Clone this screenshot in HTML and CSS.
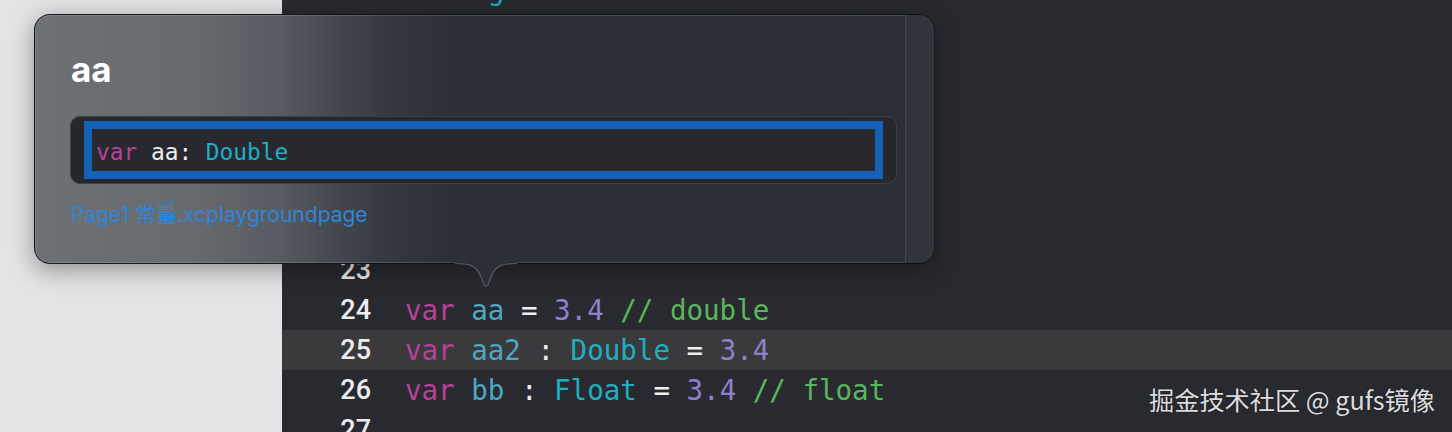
FILE: index.html
```html
<!DOCTYPE html>
<html lang="zh">
<head>
<meta charset="utf-8">
<title>Quick Help</title>
<link rel="stylesheet" href="styles.css">
</head>
<body>
<div class="app">
  <aside class="sidebar"></aside>
  <main class="editor">
    <div class="lines">
      <div class="line dim"><span class="num">16</span><code class="src">var  <span class="t">g</span></code></div>
      <div class="line"><span class="num"></span><code class="src"></code></div>
      <div class="line"><span class="num"></span><code class="src"></code></div>
      <div class="line"><span class="num"></span><code class="src"></code></div>
      <div class="line"><span class="num"></span><code class="src"></code></div>
      <div class="line"><span class="num"></span><code class="src"></code></div>
      <div class="line"><span class="num"></span><code class="src"></code></div>
      <div class="line"><span class="num">23</span><code class="src"></code></div>
      <div class="line"><span class="num">24</span><code class="src"><span class="k">var</span> <span class="v">aa</span> <span class="o">=</span> <span class="n">3.4</span> <span class="c">// double</span></code></div>
      <div class="line current"><span class="num">25</span><code class="src"><span class="k">var</span> <span class="v">aa2</span> <span class="o">:</span> <span class="t">Double</span> <span class="o">=</span> <span class="n">3.4</span></code></div>
      <div class="line"><span class="num">26</span><code class="src"><span class="k">var</span> <span class="v">bb</span> <span class="o">:</span> <span class="t">Float</span> <span class="o">=</span> <span class="n">3.4</span> <span class="c">// float</span></code></div>
      <div class="line"><span class="num">27</span><code class="src"></code></div>
    </div>
  </main>
</div>

<div class="popover">
  <div class="pop-main">
    <h1 class="pop-title">aa</h1>
    <div class="decl">
      <div class="decl-focus"><code class="decl-code"><span class="k">var</span> <span class="w">aa</span><span class="w">:</span> <span class="t">Double</span></code></div>
    </div>
    <a class="pop-link">Page1 常量.xcplaygroundpage</a>
  </div>
  <div class="pop-strip"></div>
  <svg class="pop-arrow" width="62" height="28" viewBox="0 0 62 28">
    <path d="M0 0 L0 2 C15 2 19 4 24 11 L29 23 Q31 26.5 33 23 L38 11 C43 4 47 2 62 2 L62 0 Z" fill="#2b2e37"/>
    <path d="M0 1.5 C15 1.5 19 3.5 24 10.5 L29 22.5 Q31 26 33 22.5 L38 10.5 C43 3.5 47 1.5 62 1.5" fill="none" stroke="#555a63" stroke-width="1.2"/>
  </svg>
</div>

<div class="watermark">掘金技术社区 @ gufs镜像</div>
</body>
</html>
```

FILE: styles.css
```css
html, body {
  margin: 0;
  padding: 0;
  width: 1452px;
  height: 432px;
  overflow: hidden;
  background: #292a30;
}

.app {
  display: flex;
  height: 432px;
}

.sidebar {
  width: 282px;
  flex: none;
  background: #e4e4e6;
}

.editor {
  flex: 1;
  background: #292a30;
  overflow: hidden;
}

.lines {
  margin-top: -30px;
  display: flex;
  flex-direction: column;
}

.line {
  height: 40px;
  display: flex;
  align-items: center;
}

.line.current {
  background: #3a3a3c;
}

.num {
  width: 89px;
  flex: none;
  text-align: right;
  font-family: Roboto, "Noto Sans", sans-serif;
  font-weight: 500;
  font-size: 27px;
  color: #ececee;
}

.line.dim .num {
  color: #6e6f74;
}

.src {
  margin-left: 34px;
  font-family: "DejaVu Sans Mono", "Liberation Mono", monospace;
  font-size: 27.5px;
  white-space: pre;
  color: #e8e8ea;
}

.k { color: #b8409a; }
.v { color: #4aa8c2; }
.t { color: #1fafc3; }
.n { color: #8d80cc; }
.c { color: #58b75a; }
.o { color: #ececee; }
.w { color: #eeeef0; }

/* Quick help popover */
.popover {
  position: absolute;
  left: 34px;
  top: 14px;
  width: 901px;
  height: 250px;
  box-sizing: border-box;
  border: 1px solid rgba(10, 10, 12, 0.85);
  border-radius: 16px;
  background: linear-gradient(90deg, #6d7176 0%, #666a6f 18%, #585c62 27%, #42464d 34%, #33373f 40%, #2c3039 46%, #2b2e37 100%);
  box-shadow: 0 6px 24px rgba(0, 0, 0, 0.38), inset 0 0 0 1px rgba(255, 255, 255, 0.14);
  display: flex;
}

.pop-main {
  flex: 1;
  padding: 0 8px 0 35px;
  display: flex;
  flex-direction: column;
  align-items: flex-start;
}

.pop-title {
  margin: 34px 0 0 1px;
  height: 40px;
  line-height: 40px;
  font-family: Inter, "Noto Sans", sans-serif;
  font-weight: 700;
  font-size: 35px;
  color: #ffffff;
}

.decl {
  margin-top: 27px;
  align-self: stretch;
  height: 68px;
  box-sizing: border-box;
  border: 1px solid #3e4149;
  border-radius: 10px;
  background: #25272d;
  padding: 4px 13px 0 13px;
}

.decl-focus {
  height: 58px;
  box-sizing: border-box;
  border: 8px solid #1561b7;
  background: #27292f;
  display: flex;
  align-items: center;
  padding: 3px 0 0 4px;
}

.decl-code {
  font-family: "DejaVu Sans Mono", "Liberation Mono", monospace;
  font-size: 22.8px;
  white-space: pre;
  color: #eeeef0;
}

.pop-link {
  margin: 18px 0 0 1px;
  line-height: 26px;
  font-family: Inter, "Noto Sans", "Noto Sans CJK SC", sans-serif;
  font-size: 21px;
  color: #2f86d8;
}

.pop-strip {
  width: 28px;
  flex: none;
  border-left: 1px solid #43474f;
  background: #30343c;
  border-radius: 0 15px 15px 0;
}

.pop-arrow {
  position: absolute;
  left: 420px;
  top: calc(100% - 1px);
  display: block;
}

.watermark {
  position: absolute;
  left: 1149px;
  top: 382px;
  line-height: 34px;
  font-family: "Noto Sans CJK SC", "Noto Sans", sans-serif;
  font-size: 25.2px;
  color: #dcdcde;
  text-shadow: 0 0 2px rgba(0, 0, 0, 0.4);
  white-space: nowrap;
}
```
